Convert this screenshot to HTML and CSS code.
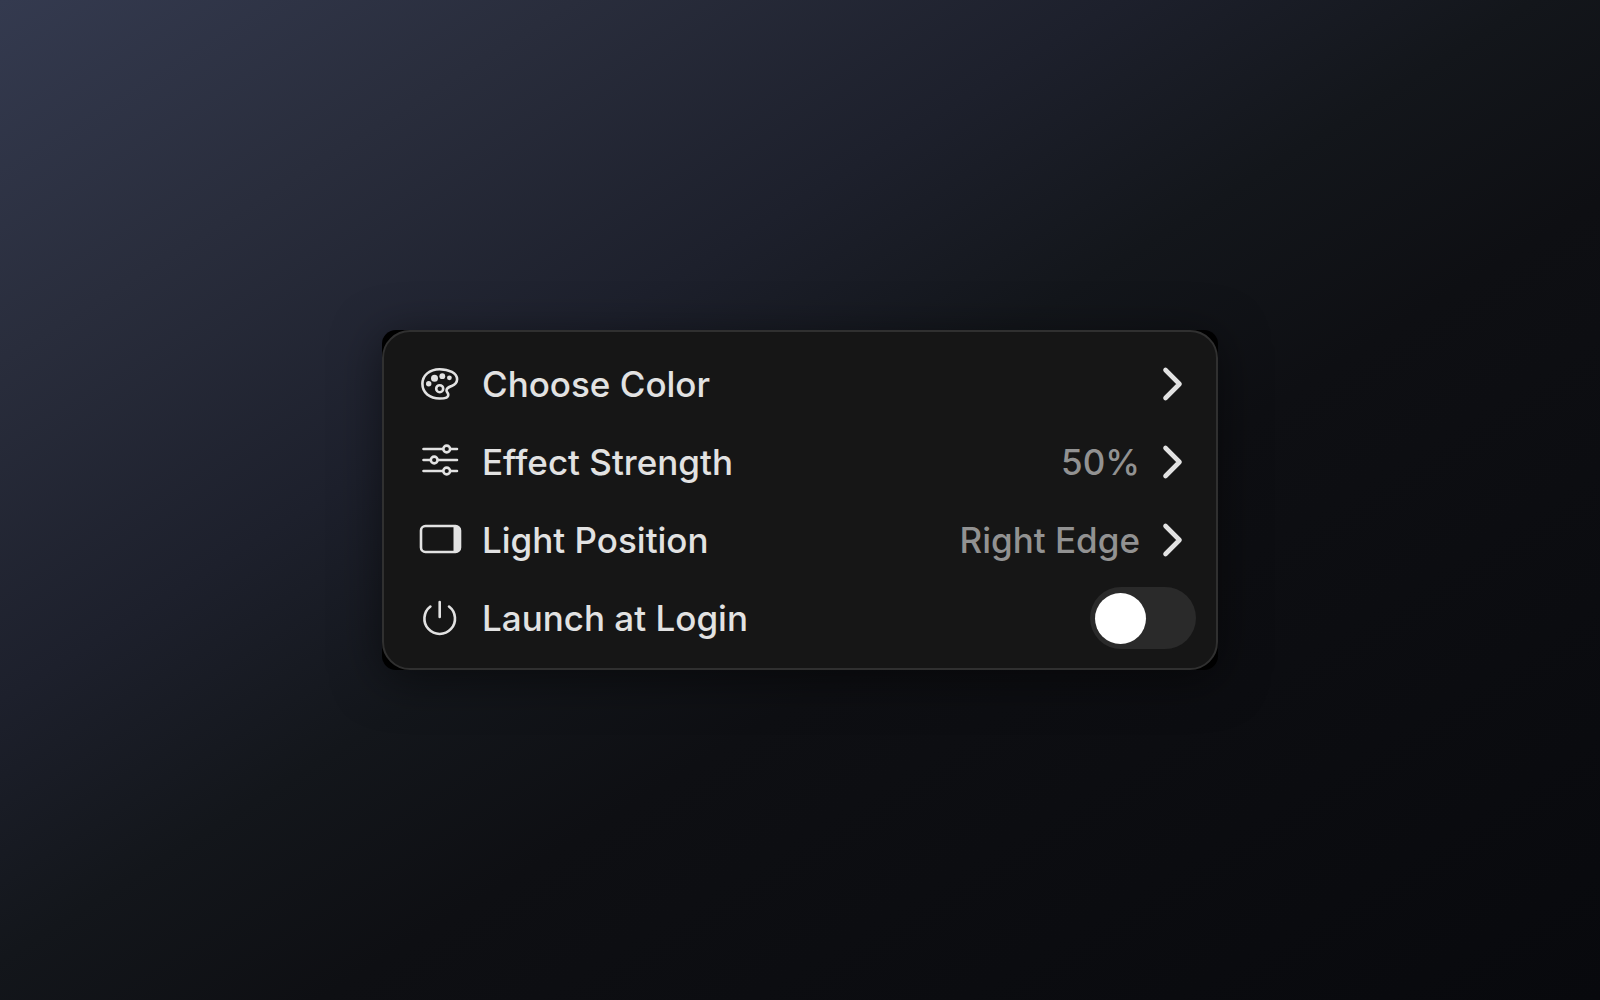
FILE: index.html
```html
<!DOCTYPE html>
<html lang="en">
<head>
<meta charset="utf-8">
<meta name="viewport" content="width=device-width, initial-scale=1">
<title>Light Settings</title>
<link rel="stylesheet" href="styles.css">
</head>
<body>
<main class="stage">
  <div class="backing">
    <ul class="menu">
      <li>
        <button class="row" type="button">
          <svg class="icon" viewBox="0 0 44 44" aria-hidden="true">
            <path d="M21.500 7.200C11.500 7.200 4.400 13.500 4.400 21.800c0 9 7.200 14.700 17.300 14.700 5.500 0 8.600-1.200 8.600-3.600 0-2-1.800-2.700-1.800-4.700 0-2.300 2.300-3 5.200-4.200 3.400-1.400 5.400-3.700 5.400-6.700C39.100 11.200 31 7.200 21.500 7.200Z"/>
            <circle cx="21.700" cy="26.700" r="3.500"/>
            <g class="solid"><circle cx="10.700" cy="21.700" r="2.700"/><circle cx="16.500" cy="16.200" r="3.500"/><circle cx="24.300" cy="14.200" r="2.900"/><circle cx="31.400" cy="15.800" r="2.400"/></g>
          </svg>
          <span class="label">Choose Color</span>
          <svg class="chevron" viewBox="0 0 22 44" aria-hidden="true"><path d="M3.500 8 17.500 22 3.500 36"/></svg>
        </button>
      </li>
      <li>
        <button class="row" type="button">
          <svg class="icon" viewBox="0 0 44 44" aria-hidden="true">
            <path d="M5.500 9H25M32.500 9H39M5.500 20H12.500M20 20H39M5.500 31H25M32.500 31H39"/>
            <circle cx="28.700" cy="9" r="3.400"/><circle cx="16.200" cy="20" r="3.400"/><circle cx="28.700" cy="31" r="3.400"/>
          </svg>
          <span class="label">Effect Strength</span>
          <span class="value">50%</span>
          <svg class="chevron" viewBox="0 0 22 44" aria-hidden="true"><path d="M3.500 8 17.500 22 3.500 36"/></svg>
        </button>
      </li>
      <li>
        <button class="row" type="button">
          <svg class="icon" viewBox="0 0 44 44" aria-hidden="true">
            <rect x="3" y="8" width="39" height="26" rx="4.500"/>
            <path class="solid" d="M35.500 8H38a4.500 4.500 0 0 1 4.500 4.500v17A4.500 4.500 0 0 1 38 34h-2.500Z"/>
          </svg>
          <span class="label">Light Position</span>
          <span class="value">Right Edge</span>
          <svg class="chevron" viewBox="0 0 22 44" aria-hidden="true"><path d="M3.500 8 17.500 22 3.500 36"/></svg>
        </button>
      </li>
      <li>
        <label class="row row-switch">
          <svg class="icon" viewBox="0 0 44 44" aria-hidden="true">
            <path d="M21.700 6V21M12.400 10.500A15.300 15.300 0 1 0 31 10.500"/>
          </svg>
          <span class="label">Launch at Login</span>
          <input class="switch" type="checkbox" role="switch">
        </label>
      </li>
    </ul>
  </div>
</main>
</body>
</html>
```
FILE: styles.css
```css
* { box-sizing: border-box; }

body {
  margin: 0;
  font-family: Inter, "Liberation Sans", sans-serif;
  color: #e2e2e2;
}

.stage {
  min-height: 100vh;
  padding: 32px;
  display: grid;
  place-items: center;
  background: linear-gradient(to bottom right, #343a4f 0%, #292d3c 18%, #1d202c 35%, #13161b 48%, #0e0f13 60%, #08090d 100%);
}

.backing {
  width: 100%;
  max-width: 836px;
  background: #000;
  border-radius: 14px;
  box-shadow: 0 8px 48px rgba(0, 0, 0, 0.5);
}

.menu {
  margin: 0;
  padding: 13px 0 11px;
  list-style: none;
  background: #161616;
  border: 2px solid #303030;
  border-radius: 28px;
}

.row {
  width: 100%;
  height: 78px;
  padding: 0 32px 0 34px;
  display: flex;
  align-items: center;
  border: 0;
  background: none;
  color: inherit;
  font: inherit;
  font-size: 35px;
  font-weight: 500;
  line-height: 44px;
  text-align: left;
  cursor: pointer;
}

.row-switch { padding-right: 20px; }

.label {
  flex: 1;
  margin-left: 20px;
}

.value {
  margin-right: 22px;
  color: #929292;
}

.icon,
.chevron {
  flex: none;
  width: 44px;
  height: 44px;
  fill: none;
  stroke: #e2e2e2;
  stroke-width: 2.6;
  stroke-linecap: round;
  stroke-linejoin: round;
}

.chevron {
  width: 22px;
  stroke-width: 4.6;
}

.solid {
  fill: #e2e2e2;
  stroke: none;
}

.switch {
  appearance: none;
  flex: none;
  display: flex;
  align-items: center;
  width: 106px;
  height: 62px;
  margin: 0;
  padding: 0 5px;
  border-radius: 31px;
  background: #2a2a2a;
  cursor: pointer;
}

.switch::before {
  content: "";
  width: 51px;
  height: 51px;
  border-radius: 50%;
  background: #fff;
}

.switch:checked {
  justify-content: flex-end;
  background: #30a14e;
}
```
